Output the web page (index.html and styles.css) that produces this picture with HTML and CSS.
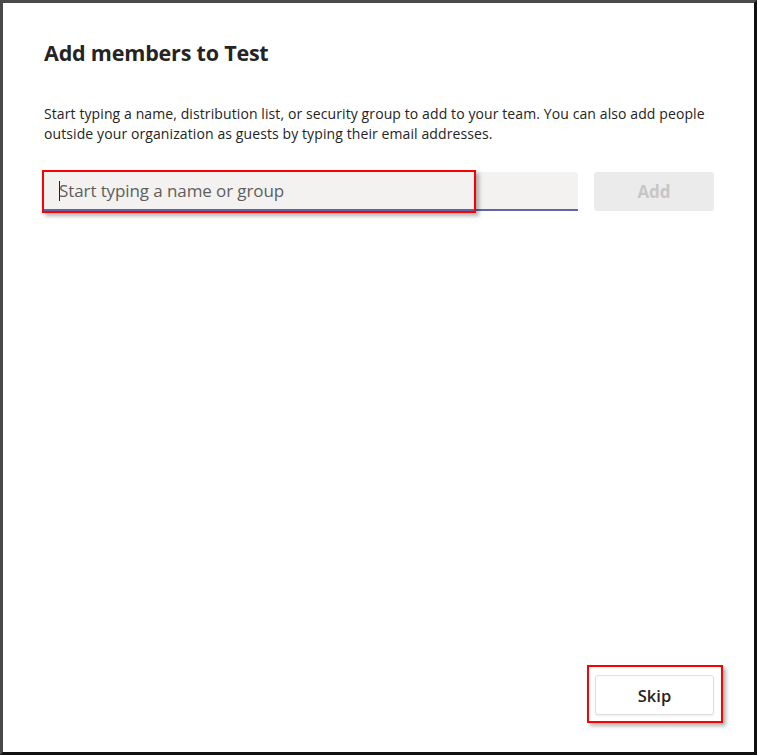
FILE: index.html
```html
<!DOCTYPE html>
<html>
<head>
<meta charset="utf-8">
<link rel="stylesheet" href="styles.css">
</head>
<body>
<div class="frame">
  <div class="dialog">
    <h1 class="title">Add members to Test</h1>
    <p class="desc">Start typing a name, distribution list, or security group to add to your team. You can also add people outside your organization as guests by typing their email addresses.</p>
    <div class="row">
      <div class="input">
        <span class="caret"></span><span class="placeholder">Start typing a name or group</span>
        <div class="mark mark-input"></div>
      </div>
      <button class="btn-add">Add</button>
    </div>
    <div class="spacer"></div>
    <div class="footer">
      <button class="btn-skip">Skip<span class="mark mark-skip"></span></button>
    </div>
  </div>
</div>
</body>
</html>
```
FILE: styles.css
```css
html, body { margin: 0; padding: 0; background: #fff; }
.frame {
  width: 757px; height: 755px; box-sizing: border-box;
  border-top: 3px solid #4a4a4a;
  border-left: 3px solid #4a4a4a;
  border-right: 3px solid #111;
  border-bottom: 3px solid #111;
  background: #fff;
  font-family: "Open Sans", "Noto Sans", sans-serif;
  color: #252423;
}
.dialog {
  height: 100%; box-sizing: border-box;
  padding: 36px 40px 37px 41px;
  display: flex; flex-direction: column;
}
.title {
  margin: 0; font-size: 21.5px; font-weight: 700; line-height: 28px;
  letter-spacing: -0.2px;
}
.desc {
  margin: 37px 0 0 0; font-size: 14px; line-height: 20px; color: #252423;
  letter-spacing: 0.1px;
}
.row { display: flex; gap: 16px; margin-top: 28px; }
.input {
  position: relative;
  width: 519px; height: 37px; background: #f3f2f1;
  border-bottom: 2px solid #6264a7; border-radius: 3px 3px 0 0;
  display: flex; align-items: center; padding-left: 15px;
}
.caret { width: 1px; height: 20px; background: #252423; margin-right: -1px; }
.placeholder { font-size: 17px; color: #605e5c; letter-spacing: -0.1px; }
.btn-add {
  width: 120px; height: 39px; border: none; border-radius: 3px; background: #ebebeb;
  color: #c8c6c4; font-family: inherit; font-size: 17px; font-weight: 700;
}
.spacer { flex: 1; }
.footer { display: flex; justify-content: flex-end; }
.btn-skip {
  position: relative;
  width: 119px; height: 40px; background: #fff; border: 1px solid #e1dfdd; border-radius: 3px;
  color: #252423; font-family: inherit; font-size: 16.5px; font-weight: 600;
  box-shadow: 0 1px 2px rgba(0,0,0,0.08);
}
.mark {
  position: absolute; border: 2px solid #ff0000;
  box-shadow: 3px 3px 4px rgba(0,0,0,0.3);
}
.mark-input { left: -2px; top: -2px; width: 430px; height: 39px; }
.mark-skip { left: -9px; top: -11px; width: 132px; height: 54px; }
```
